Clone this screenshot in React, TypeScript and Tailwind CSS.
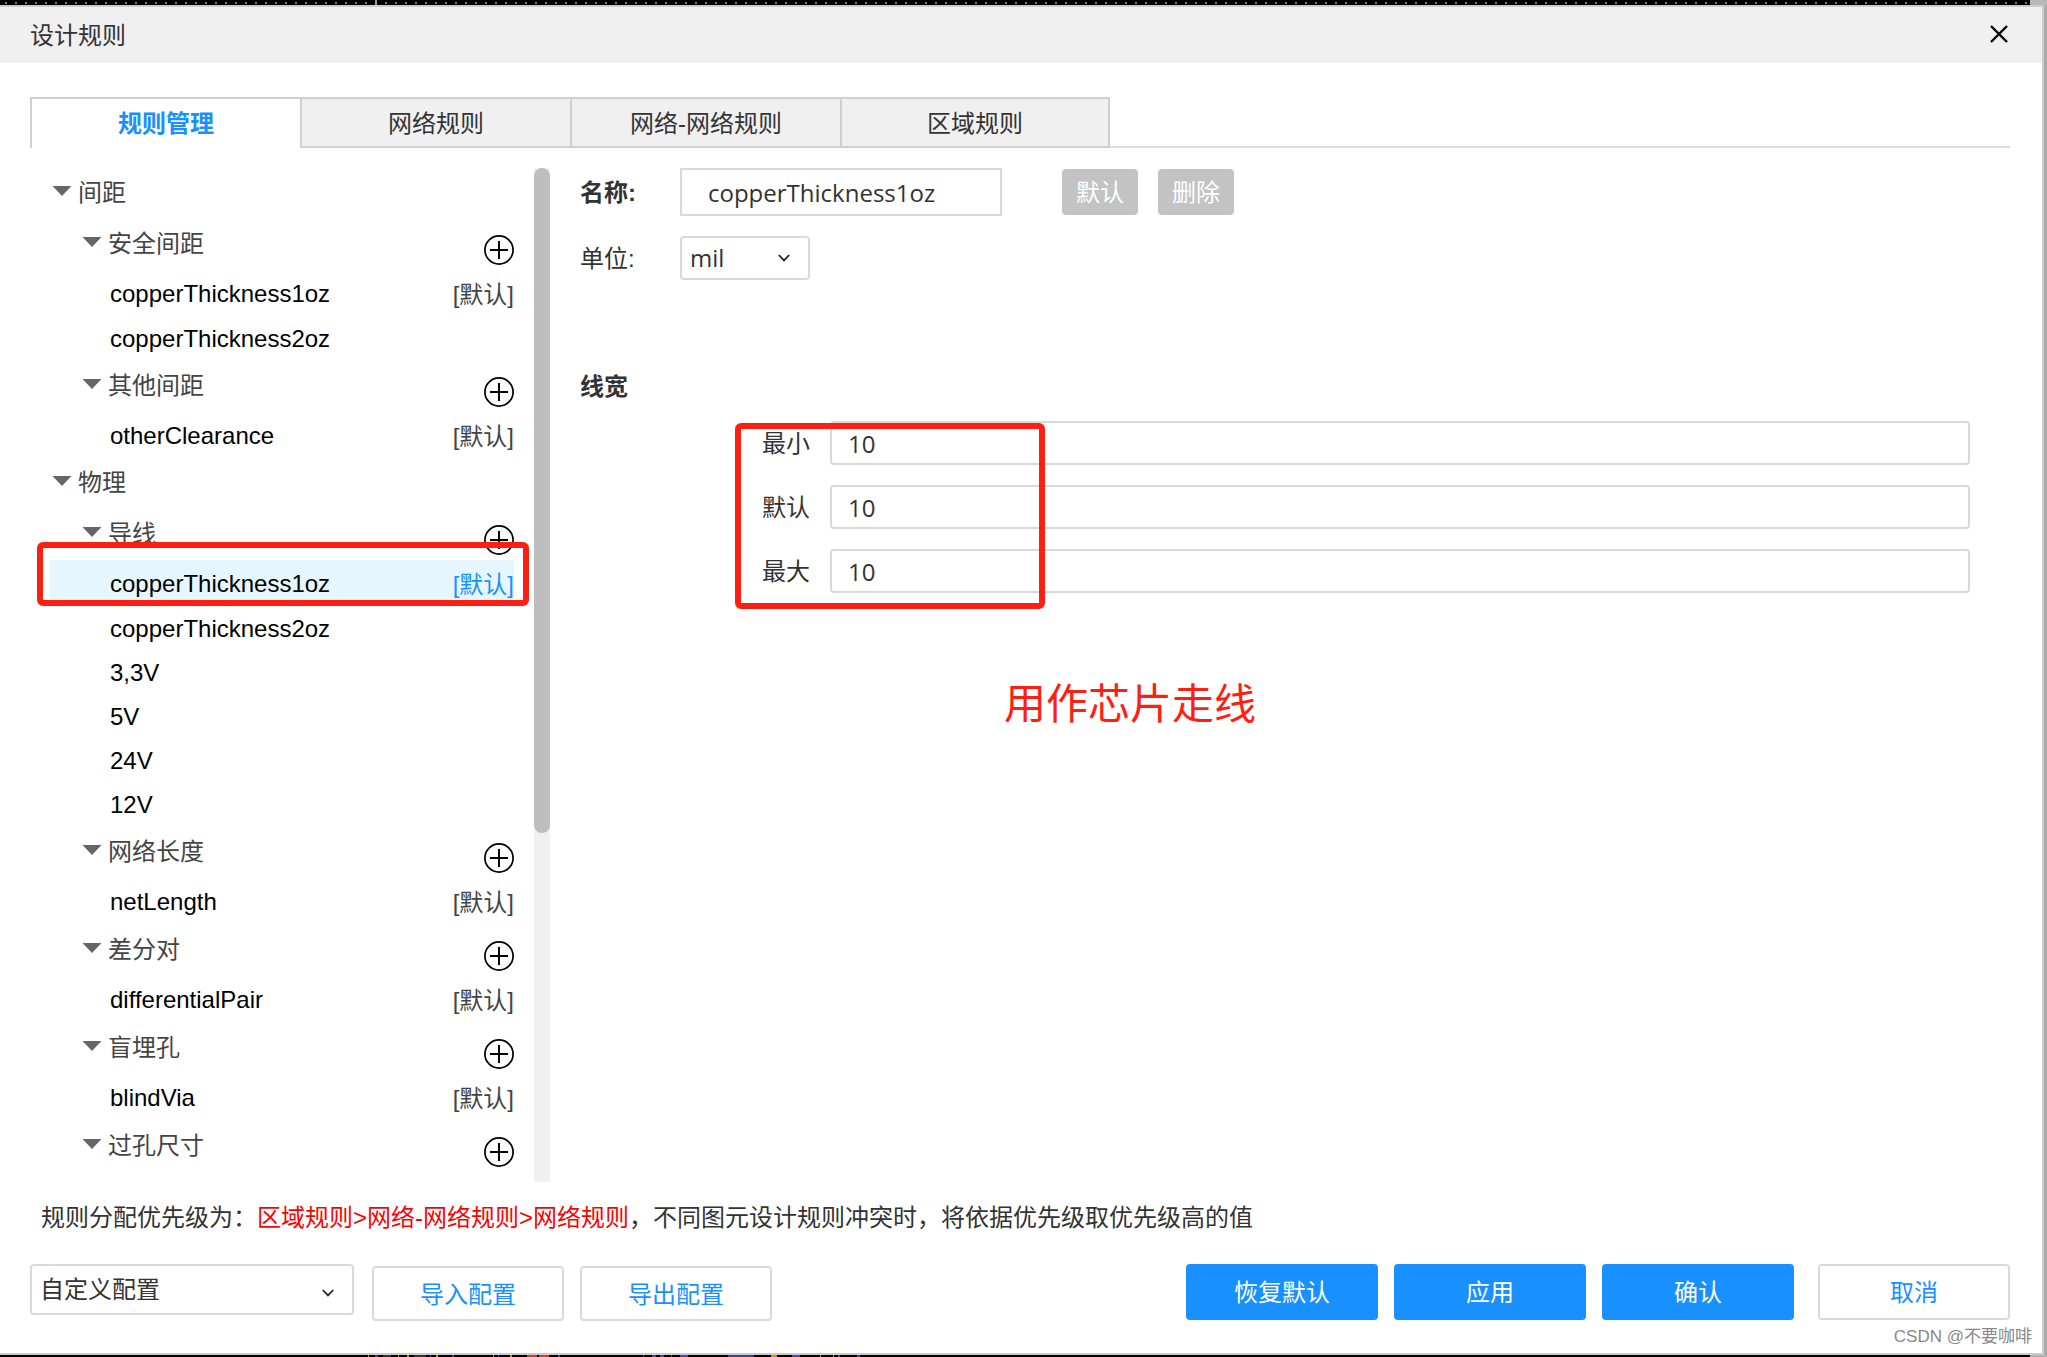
import type { ReactNode } from "react";

const CJK = "font-['Liberation_Sans','Noto_Sans_CJK_SC',sans-serif]";
const UI = "font-['Open_Sans','Noto_Sans_CJK_SC',sans-serif]";

type Item = { name: string; tag?: boolean; selected?: boolean };
type Group = { title: string; items: Item[] };
type Section = { title: string; groups: Group[] };

const sections: Section[] = [
  {
    title: "间距",
    groups: [
      { title: "安全间距", items: [{ name: "copperThickness1oz", tag: true }, { name: "copperThickness2oz" }] },
      { title: "其他间距", items: [{ name: "otherClearance", tag: true }] },
    ],
  },
  {
    title: "物理",
    groups: [
      {
        title: "导线",
        items: [
          { name: "copperThickness1oz", tag: true, selected: true },
          { name: "copperThickness2oz" },
          { name: "3,3V" },
          { name: "5V" },
          { name: "24V" },
          { name: "12V" },
        ],
      },
      { title: "网络长度", items: [{ name: "netLength", tag: true }] },
      { title: "差分对", items: [{ name: "differentialPair", tag: true }] },
      { title: "盲埋孔", items: [{ name: "blindVia", tag: true }] },
      { title: "过孔尺寸", items: [] },
    ],
  },
];

function Caret() {
  return (
    <svg viewBox="0 0 20 10" className="mb-1 h-[10px] w-5 shrink-0" aria-hidden="true">
      <path d="M0.5 0H19.5L10 10Z" fill="#666" />
    </svg>
  );
}

function PlusCircle() {
  return (
    <svg viewBox="0 0 30 30" className="size-[30px]" fill="none" stroke="#000" aria-hidden="true">
      <circle cx="15" cy="15" r="14.1" strokeWidth="1.7" />
      <path d="M15 6V24M6 15H24" strokeWidth="2" />
    </svg>
  );
}

function Chevron() {
  return (
    <svg viewBox="0 0 12 8" className="pointer-events-none absolute top-1/2 right-5 h-2 w-3 -translate-y-1/2" fill="none" aria-hidden="true">
      <path d="M0.8 1L6 6.4L11.2 1" stroke="#222" strokeWidth="1.8" />
    </svg>
  );
}

function ToggleRow({ title }: { title: string }) {
  return (
    <button type="button" className="flex items-center gap-[6px] leading-9">
      <Caret />
      <span>{title}</span>
    </button>
  );
}

function RuleTree() {
  return (
    <nav aria-label="规则" className="w-[464px] text-[#444]">
      {sections.map((s) => (
        <section key={s.title}>
          <div className="flex h-[50px] items-center pl-[2px]">
            <ToggleRow title={s.title} />
          </div>
          {s.groups.map((g) => (
            <div key={g.title}>
              <div className="flex h-[52px] items-center justify-between pl-8">
                <ToggleRow title={g.title} />
                <button type="button" aria-label={"新增" + g.title} className="mt-3">
                  <PlusCircle />
                </button>
              </div>
              <ul>
                {g.items.map((it) => (
                  <li key={it.name} className="relative">
                    <button
                      type="button"
                      className={
                        "flex w-full items-center justify-between pt-[2px] pl-[60px] text-black " +
                        (it.tag ? "h-[46px] " : "h-[44px] ") +
                        (it.selected ? "bg-[#e6f6ff]" : "")
                      }
                    >
                      <span>{it.name}</span>
                      {it.tag && (
                        <span className={it.selected ? "pt-[2px] text-[#1890ff]" : "pt-[2px] text-[#444]"}>[默认]</span>
                      )}
                    </button>
                    {it.selected && (
                      <span className="pointer-events-none absolute -top-[18px] -right-[15px] bottom-0 -left-[13px] rounded-md border-6 border-[#ff1f12]" />
                    )}
                  </li>
                ))}
              </ul>
            </div>
          ))}
        </section>
      ))}
    </nav>
  );
}

const tabs = ["规则管理", "网络规则", "网络-网络规则", "区域规则"];

function Tabs() {
  return (
    <div role="tablist" className="mt-[34px] mr-8 ml-[30px] flex">
      {tabs.map((t, i) => (
        <button
          key={t}
          type="button"
          role="tab"
          aria-selected={i === 0}
          className={
            "h-[51px] w-[270px] border-t-2 border-l-2 border-[#d0d0d0] " +
            (i === 0
              ? "bg-white font-bold text-[#1890ff]"
              : i === 3
                ? "border-r-2 border-b-2 bg-[#f0f0f0] pt-[2px]"
                : "border-b-2 bg-[#f0f0f0] pt-[2px]")
          }
        >
          {t}
        </button>
      ))}
      <div className="flex-1 border-b-2 border-[#dcdcdc]" />
    </div>
  );
}

const widths = [
  { id: "min", label: "最小", value: "10" },
  { id: "def", label: "默认", value: "10" },
  { id: "max", label: "最大", value: "10" },
];

function GreyButton({ children }: { children: ReactNode }) {
  return (
    <button type="button" className="h-[46px] w-[76px] rounded-[4px] bg-[#c3c3c3] pt-[2px] text-white">
      {children}
    </button>
  );
}

function Details() {
  return (
    <div className="min-w-0 flex-1 pl-[30px]">
      <div className="flex items-center">
        <label htmlFor="rule-name" className="w-[100px] pt-[2px] font-bold">
          名称:
        </label>
        <input
          id="rule-name"
          defaultValue="copperThickness1oz"
          className={`h-12 w-[322px] border-2 border-[#d9d9d9] bg-white px-[26px] ${UI}`}
        />
        <div className="ml-[60px] flex gap-5">
          <GreyButton>默认</GreyButton>
          <GreyButton>删除</GreyButton>
        </div>
      </div>
      <div className="mt-5 flex items-center">
        <label htmlFor="unit" className="w-[100px] pt-[2px]">
          单位:
        </label>
        <div className="relative">
          <select
            id="unit"
            className={`h-11 w-[130px] appearance-none rounded-[4px] border-2 border-[#d9d9d9] bg-white pl-2 ${UI}`}
          >
            <option>mil</option>
          </select>
          <Chevron />
        </div>
      </div>
      <h2 className="mt-[89px] leading-9 font-bold">线宽</h2>
      <div className="relative mt-4 mr-[72px] ml-[182px] flex flex-col gap-5">
        {widths.map((w) => (
          <div key={w.id} className="flex items-center gap-5">
            <label htmlFor={w.id} className="pt-[2px]">
              {w.label}
            </label>
            <input
              id={w.id}
              defaultValue={w.value}
              className={`h-11 min-w-0 flex-1 rounded-[4px] border-2 border-[#d9d9d9] bg-white px-4 ${UI}`}
            />
          </div>
        ))}
        <span className="pointer-events-none absolute top-[2px] -bottom-4 -left-[27px] w-[310px] rounded-md border-6 border-[#ff1f12]" />
      </div>
      <p className="mt-20 ml-[424px] text-[42px] leading-[64px] text-[#ff1f12]">用作芯片走线</p>
    </div>
  );
}

function OutlineButton({ children, tall }: { children: ReactNode; tall?: boolean }) {
  return (
    <button
      type="button"
      className={
        "w-[192px] rounded-[4px] border-2 border-[#d9d9d9] bg-white pt-[2px] text-[#1890ff] " +
        (tall ? "h-14" : "h-[55px]")
      }
    >
      {children}
    </button>
  );
}

function PrimaryButton({ children }: { children: ReactNode }) {
  return (
    <button type="button" className="h-14 w-[192px] rounded-[4px] bg-[#1890ff] pt-[2px] text-white">
      {children}
    </button>
  );
}

function CanvasTop() {
  return (
    <div className="flex h-[5px]">
      <svg className="h-[5px] min-w-0 flex-1 bg-black" aria-hidden="true">
        <defs>
          <pattern id="grid" x="5" width="10" height="5" patternUnits="userSpaceOnUse">
            <rect x="0" y="2" width="2" height="2" fill="#777" />
          </pattern>
        </defs>
        <rect width="100%" height="5" fill="url(#grid)" />
        <rect x="375" width="2" height="5" fill="#999" />
      </svg>
      <div className="w-[17px] bg-[#b8b8b8]" />
    </div>
  );
}

const traces: [number, number, string][] = [
  [368, 1, "#b8a000"],
  [375, 3, "#7a2a5a"],
  [383, 8, "#333"],
  [398, 1, "#b8a000"],
  [407, 2, "#b8a000"],
  [414, 12, "#333"],
  [430, 1, "#4848b0"],
  [436, 2, "#b8a000"],
  [452, 2, "#4848b0"],
  [493, 1, "#b8a000"],
  [498, 1, "#4848b0"],
  [510, 2, "#b8a000"],
  [527, 10, "#d04010"],
  [539, 10, "#d04010"],
  [558, 2, "#4848b0"],
  [643, 1, "#4848b0"],
  [652, 4, "#4848b0"],
  [660, 4, "#4848b0"],
  [671, 1, "#4848b0"],
  [680, 8, "#4848b0"],
  [728, 26, "#3c3c9c"],
  [771, 6, "#b8a000"],
  [792, 8, "#4848b0"],
  [820, 1, "#b8a000"],
  [833, 1, "#b8a000"],
  [838, 2, "#4848b0"],
  [857, 3, "#4848b0"],
];

function CanvasBottom() {
  return (
    <div className="flex h-[2px]">
      <svg className="h-[2px] min-w-0 flex-1 bg-black" aria-hidden="true">
        {traces.map(([x, w, fill]) => (
          <rect key={x} x={x} width={w} height="2" fill={fill} />
        ))}
      </svg>
      <div className="w-[17px] bg-[#b0b0b0]" />
    </div>
  );
}

export default function App() {
  return (
    <div className={`flex min-h-screen flex-col bg-black text-2xl text-[#333] ${CJK}`}>
      <CanvasTop />
      <div className="flex flex-1">
        <main className="relative flex flex-1 flex-col border-t-2 border-r-2 border-b-2 border-[#ccc] bg-white">
          <header className="flex h-14 items-center justify-between bg-[#f0f0f0] pr-[34px] pl-[30px]">
            <h1 className="pt-[2px]">设计规则</h1>
            <button type="button" aria-label="关闭" className="pb-[2px]">
              <svg viewBox="0 0 18 18" className="size-[18px]" fill="none" aria-hidden="true">
                <path d="M1 1L17 17M17 1L1 17" stroke="#000" strokeWidth="2.4" />
              </svg>
            </button>
          </header>
          <Tabs />
          <div className="flex pt-5 pl-[50px]">
            <RuleTree />
            <div className="ml-5 h-[1014px] w-4 bg-[#f0f0f0]">
              <div className="h-[665px] rounded-full bg-[#bebebe]" />
            </div>
            <Details />
          </div>
          <p className="mt-[18px] ml-[41px] leading-9">
            规则分配优先级为：<span className="text-[#ff0000]">区域规则&gt;网络-网络规则&gt;网络规则</span>
            ，不同图元设计规则冲突时，将依据优先级取优先级高的值
          </p>
          <footer className="mt-7 mb-8 flex items-start justify-between pr-8 pl-[30px]">
            <div className="flex">
              <div className="relative">
                <select
                  aria-label="配置"
                  className="h-[51px] w-[324px] appearance-none rounded-[4px] border-2 border-[#d9d9d9] bg-white pl-2"
                >
                  <option>自定义配置</option>
                </select>
                <Chevron />
              </div>
              <div className="mt-[2px] ml-[18px] flex gap-4">
                <OutlineButton>导入配置</OutlineButton>
                <OutlineButton>导出配置</OutlineButton>
              </div>
            </div>
            <div className="flex gap-4">
              <PrimaryButton>恢复默认</PrimaryButton>
              <PrimaryButton>应用</PrimaryButton>
              <PrimaryButton>确认</PrimaryButton>
              <div className="ml-2">
                <OutlineButton tall>取消</OutlineButton>
              </div>
            </div>
          </footer>
          <span className="absolute right-[10px] bottom-[2px] text-[17px] leading-7 text-[#888]">CSDN @不要咖啡</span>
        </main>
        <div className="w-[3px] bg-[#ababab]" />
      </div>
      <CanvasBottom />
    </div>
  );
}
